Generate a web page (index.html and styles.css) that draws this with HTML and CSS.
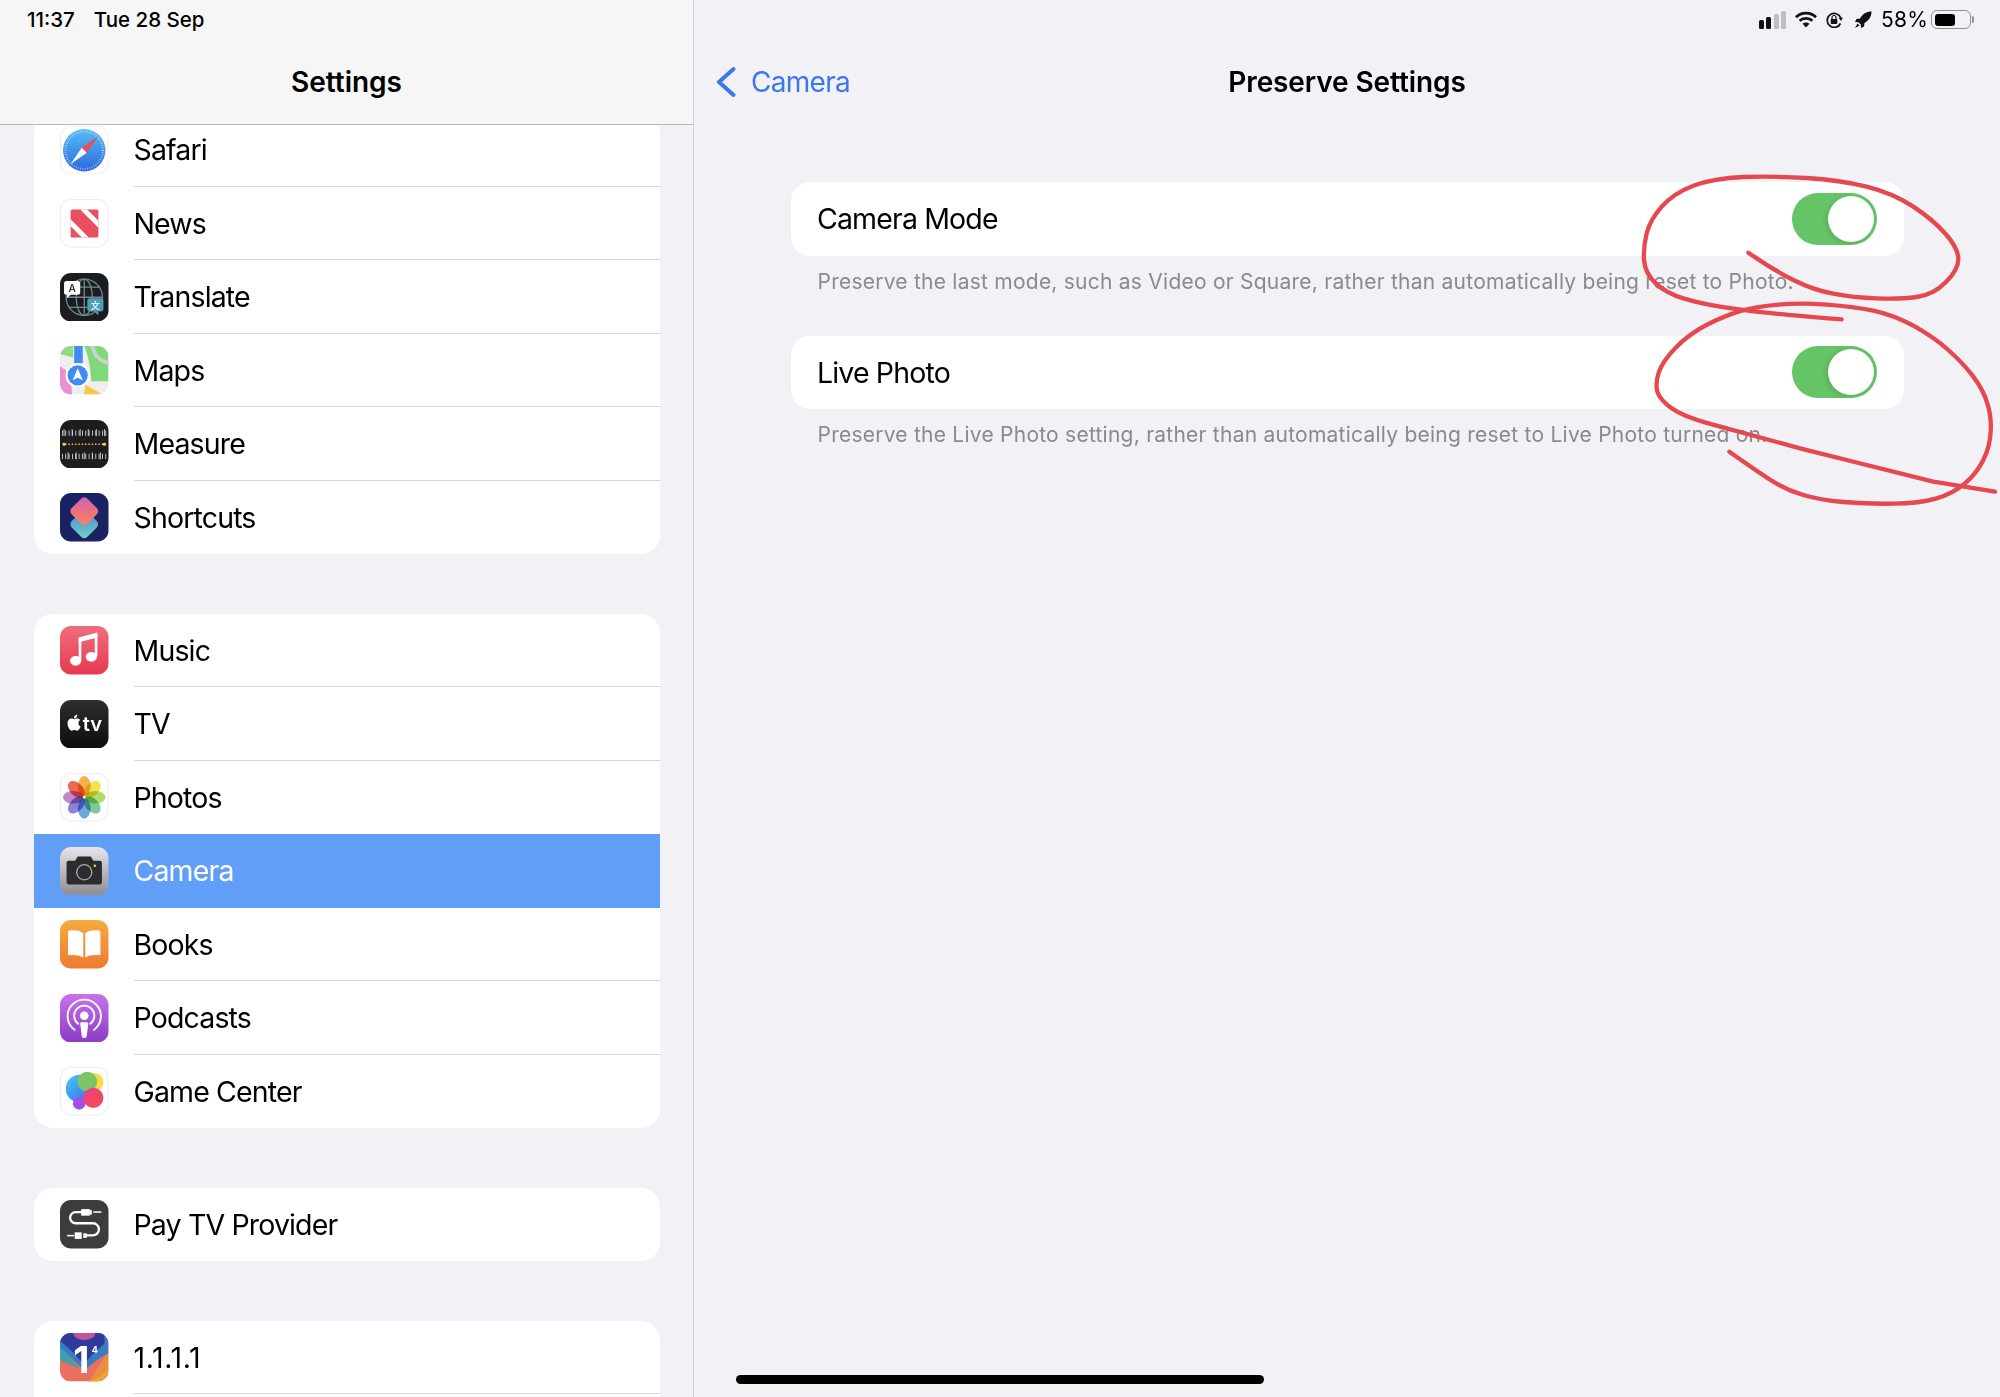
FILE: index.html
```html
<!DOCTYPE html>
<html lang="en">
<head>
<meta charset="utf-8">
<title>Preserve Settings</title>
<link rel="stylesheet" href="styles.css">
</head>
<body>
<div class="app">
  <aside class="sidebar">
    <header class="side-head">
      <div class="clock"><span>11:37</span><span>Tue 28 Sep</span></div>
      <h1 class="side-title">Settings</h1>
    </header>
    <div class="side-list">
      <section class="group group-first">
        <div class="row">
          <svg class="icon" viewBox="0 0 48 48"><defs><linearGradient id="sf" x1="0" y1="0" x2="0" y2="1"><stop offset="0" stop-color="#55bdf6"/><stop offset="1" stop-color="#2f68df"/></linearGradient></defs><rect x=".5" y=".5" width="47" height="47" rx="10.5" fill="#fff" stroke="#eeeef2"/><circle cx="24" cy="24" r="21" fill="url(#sf)"/><circle cx="24" cy="24" r="18.5" fill="none" stroke="#fff" stroke-opacity=".65" stroke-width="2" stroke-dasharray=".7 1.6"/><polygon points="37.5,10.5 21.5,21.5 26.5,26.5" fill="#ee4d4f"/><polygon points="10.5,37.5 21.5,21.5 26.5,26.5" fill="#fff"/></svg>
          <div class="label">Safari</div>
        </div>
        <div class="row">
          <svg class="icon" viewBox="0 0 48 48"><rect x=".5" y=".5" width="47" height="47" rx="10.5" fill="#fff" stroke="#eeeef2"/><rect x="10.5" y="10.5" width="27.5" height="27.5" rx="1.5" fill="#e9505f"/><polygon points="10.5,20 10.5,27 21.5,38 28.5,38" fill="#fff"/><polygon points="20,10.5 27,10.5 38,21.5 38,28.5" fill="#fff"/></svg>
          <div class="label">News</div>
        </div>
        <div class="row">
          <svg class="icon" viewBox="0 0 48 48"><rect width="48" height="48" rx="11" fill="#1b1c1f"/><g fill="none" stroke="#71898f" stroke-width="1.3"><circle cx="24" cy="24" r="18"/><ellipse cx="24" cy="24" rx="8" ry="18"/><path d="M24 6v36M6 24h36M9 14h30M9 34h30"/></g><rect x="4" y="8" width="16" height="13.5" rx="2.5" fill="#fff"/><path d="M7 21v4l4-4z" fill="#fff"/><text class="ico-a" x="12" y="19">A</text><rect x="27" y="25" width="16" height="13" rx="2.5" fill="#4aa0b8"/><path d="M38 38v4l-4-4z" fill="#4aa0b8"/><text class="ico-wen" x="35" y="35.5">文</text></svg>
          <div class="label">Translate</div>
        </div>
        <div class="row">
          <svg class="icon" viewBox="0 0 48 48"><clipPath id="mp"><rect width="48" height="48" rx="11"/></clipPath><g clip-path="url(#mp)"><rect width="48" height="48" fill="#eeeeee"/><path d="M0 0H13V11.500L0 8Z" fill="#8fdb7f"/><path d="M24 0H48V35H31C30 20 28 10 24 0Z" fill="#7fd979"/><path d="M32 -1C33 8 39 15 49 17" fill="none" stroke="#cfcfcf" stroke-width="4"/><rect x="14" y="0" width="8.500" height="17" fill="#3f8df0"/><path d="M0 20L10 27L12 48H0Z" fill="#e88fd0"/><path d="M25 38L42 48H24Z" fill="#f6c945"/><circle cx="17.500" cy="29" r="12" fill="#fff"/><circle cx="17.500" cy="29" r="10" fill="#3f8df0"/><path d="M17.500 22L22.500 34L17.500 31.500L12.500 34Z" fill="#fff"/></g></svg>
          <div class="label">Maps</div>
        </div>
        <div class="row">
          <svg class="icon" viewBox="0 0 48 48"><rect width="48" height="48" rx="11" fill="#1d1d1f"/><g fill="none" stroke="#e4e4e4" stroke-width=".8"><path d="M2 13H46" stroke-width="5" stroke-dasharray=".8 2.500"/><path d="M2 36H46" stroke-width="5" stroke-dasharray=".8 2.500"/><path d="M4 16V9M12 16V9M20 16V9M28 16V9M36 16V9M44 16V9M8 39V32M16 39V32M24 39V32M32 39V32M40 39V32"/></g><path d="M5 24H43" stroke="#f3cf3e" stroke-width="1.400" stroke-dasharray="1.400 1.900"/><rect x="2.500" y="22.500" width="3" height="3" rx="1" fill="#f3cf3e"/><rect x="42.500" y="22.500" width="3" height="3" rx="1" fill="#f3cf3e"/></svg>
          <div class="label">Measure</div>
        </div>
        <div class="row">
          <svg class="icon" viewBox="0 0 48 48"><defs><linearGradient id="st" x1="0" y1="0" x2="1" y2="1"><stop offset="0" stop-color="#c763c0"/><stop offset=".5" stop-color="#ee6f7f"/><stop offset="1" stop-color="#f08a62"/></linearGradient><linearGradient id="sb" x1="0" y1="0" x2="1" y2="1"><stop offset="0" stop-color="#4b7fd8"/><stop offset="1" stop-color="#74d7c0"/></linearGradient></defs><rect width="48" height="48" rx="11" fill="#1b2262"/><rect x="13" y="20" width="22" height="22" rx="4.500" transform="rotate(45 24 31)" fill="url(#sb)"/><rect x="13" y="7" width="22" height="22" rx="4.500" transform="rotate(45 24 18)" fill="url(#st)"/></svg>
          <div class="label">Shortcuts</div>
        </div>
      </section>

      <section class="group">
        <div class="row">
          <svg class="icon" viewBox="0 0 48 48"><defs><linearGradient id="mu" x1="0" y1="0" x2="0" y2="1"><stop offset="0" stop-color="#ee6f7e"/><stop offset="1" stop-color="#e8384f"/></linearGradient></defs><rect width="48" height="48" rx="11" fill="url(#mu)"/><g fill="#fff"><polygon points="18.500,11.500 37,6.500 37,11.500 18.500,16"/><rect x="18.500" y="12" width="2.600" height="22"/><rect x="34.400" y="8" width="2.600" height="22"/><ellipse cx="15.500" cy="34.500" rx="5.600" ry="4.800"/><ellipse cx="31" cy="30.500" rx="5.600" ry="4.800"/></g></svg>
          <div class="label">Music</div>
        </div>
        <div class="row">
          <svg class="icon" viewBox="0 0 48 48"><defs><linearGradient id="tvg" x1="0" y1="0" x2="0" y2="1"><stop offset="0" stop-color="#2e2e30"/><stop offset="1" stop-color="#0d0d0e"/></linearGradient></defs><rect width="48" height="48" rx="11" fill="url(#tvg)"/><path transform="translate(6 14.500) scale(.66)" fill="#fff" d="M12.152 6.896c-.948 0-2.415-1.078-3.96-1.04-2.04.027-3.91 1.183-4.961 3.014-2.117 3.675-.546 9.103 1.519 12.09 1.013 1.454 2.208 3.09 3.792 3.039 1.52-.065 2.09-.987 3.935-.987 1.831 0 2.35.987 3.96.948 1.637-.026 2.676-1.48 3.676-2.948 1.156-1.688 1.636-3.325 1.662-3.415-.039-.013-3.182-1.221-3.22-4.857-.026-3.04 2.48-4.494 2.597-4.559-1.429-2.09-3.623-2.324-4.39-2.376-2-.156-3.675 1.09-4.61 1.09zM15.53 3.83c.843-1.012 1.4-2.427 1.245-3.83-1.207.052-2.662.805-3.532 1.818-.78.896-1.454 2.338-1.273 3.714 1.338.104 2.715-.688 3.559-1.701"/><text class="ico-tv" x="22.500" y="30.500">tv</text></svg>
          <div class="label">TV</div>
        </div>
        <div class="row">
          <svg class="icon" viewBox="0 0 48 48"><rect x=".5" y=".5" width="47" height="47" rx="10.5" fill="#fff" stroke="#eeeef2"/><g class="petals"><ellipse cx="24" cy="13" rx="6.300" ry="10" fill="#f5b14a"/><ellipse cx="24" cy="13" rx="6.300" ry="10" fill="#f5e04e" transform="rotate(45 24 24)"/><ellipse cx="24" cy="13" rx="6.300" ry="10" fill="#b5d96a" transform="rotate(90 24 24)"/><ellipse cx="24" cy="13" rx="6.300" ry="10" fill="#7cc8a0" transform="rotate(135 24 24)"/><ellipse cx="24" cy="13" rx="6.300" ry="10" fill="#6fa8df" transform="rotate(180 24 24)"/><ellipse cx="24" cy="13" rx="6.300" ry="10" fill="#8a86d4" transform="rotate(225 24 24)"/><ellipse cx="24" cy="13" rx="6.300" ry="10" fill="#c287c4" transform="rotate(270 24 24)"/><ellipse cx="24" cy="13" rx="6.300" ry="10" fill="#ea6a55" transform="rotate(315 24 24)"/></g><circle cx="24" cy="24" r="1" fill="#fff"/></svg>
          <div class="label">Photos</div>
        </div>
        <div class="row row-on">
          <svg class="icon" viewBox="0 0 48 48"><defs><linearGradient id="cm" x1="0" y1="0" x2="0" y2="1"><stop offset="0" stop-color="#e6e6ea"/><stop offset="1" stop-color="#8c8c91"/></linearGradient></defs><rect width="48" height="48" rx="11" fill="url(#cm)"/><path d="M8.500 13.500H15L17.500 9.500H30.500L33 13.500H39.500A2 2 0 0 1 41.500 15.500V35A2 2 0 0 1 39.500 37H8.500A2 2 0 0 1 6.500 35V15.500A2 2 0 0 1 8.500 13.500Z" fill="#2c2c2e"/><circle cx="24" cy="25" r="7.500" fill="none" stroke="#a9a9ad" stroke-width="1.300"/><circle cx="34.500" cy="18.500" r="1.300" fill="#f2cd3f"/></svg>
          <div class="label">Camera</div>
        </div>
        <div class="row">
          <svg class="icon" viewBox="0 0 48 48"><defs><linearGradient id="bk" x1="0" y1="0" x2="0" y2="1"><stop offset="0" stop-color="#f5ab3e"/><stop offset="1" stop-color="#ee7a33"/></linearGradient></defs><rect width="48" height="48" rx="11" fill="url(#bk)"/><g fill="#fff"><path d="M23 13C19 10 13 10 9.500 10.500A1.500 1.500 0 0 0 8 12V35C13 34 19 34.500 23 37Z"/><path d="M25 13C29 10 35 10 38.500 10.500A1.500 1.500 0 0 1 40 12V35C35 34 29 34.500 25 37Z"/></g></svg>
          <div class="label">Books</div>
        </div>
        <div class="row">
          <svg class="icon" viewBox="0 0 48 48"><defs><linearGradient id="pd" x1="0" y1="0" x2="0" y2="1"><stop offset="0" stop-color="#c973ea"/><stop offset="1" stop-color="#8a3cc6"/></linearGradient></defs><rect width="48" height="48" rx="11" fill="url(#pd)"/><g fill="none" stroke="#fff" stroke-width="1.800" stroke-linecap="round"><path d="M14.500 35.500A16.500 16.500 0 1 1 33.500 35.500"/><path d="M18 29.500A10 10 0 1 1 30 29.500"/></g><circle cx="24" cy="21.500" r="4.200" fill="#fff"/><path d="M21.500 28H26.500A1.500 1.500 0 0 1 28 29.800L26.500 41A2.500 2.500 0 0 1 21.500 41L20 29.800A1.500 1.500 0 0 1 21.500 28Z" fill="#fff"/></svg>
          <div class="label">Podcasts</div>
        </div>
        <div class="row">
          <svg class="icon" viewBox="0 0 48 48"><defs><linearGradient id="gb" x1="0" y1="0" x2="1" y2="1"><stop offset="0" stop-color="#45ccf0"/><stop offset="1" stop-color="#3a62f0"/></linearGradient><linearGradient id="gr" x1="0" y1="0" x2="1" y2="1"><stop offset="0" stop-color="#f03c88"/><stop offset="1" stop-color="#ee4f52"/></linearGradient></defs><rect x=".5" y=".5" width="47" height="47" rx="10.5" fill="#fff" stroke="#eeeef2"/><circle cx="34" cy="15" r="9" fill="#f9dc4a"/><circle cx="19.500" cy="21.500" r="13.800" fill="url(#gb)"/><circle cx="27" cy="14.500" r="9.800" fill="#7cc468"/><circle cx="19" cy="36" r="6.200" fill="#a24fe6"/><circle cx="33" cy="30.500" r="10" fill="url(#gr)"/></svg>
          <div class="label">Game Center</div>
        </div>
      </section>

      <section class="group">
        <div class="row">
          <svg class="icon" viewBox="0 0 48 48"><rect width="48" height="48" rx="11" fill="#3c3c3e"/><path d="M22 12H15.500A5.500 5.500 0 0 0 15.500 23H32.500A6 6 0 0 1 32.500 35H26" fill="none" stroke="#fff" stroke-width="2.300"/><g fill="#fff"><rect x="21" y="9" width="8.500" height="6.500"/><rect x="29.500" y="10" width="2" height="4.500"/><rect x="33" y="11.200" width="8" height="1.500"/><rect x="14.500" y="32" width="7" height="6.500"/><rect x="23" y="33" width="3.500" height="4.500"/><rect x="7" y="34.500" width="7" height="1.500"/></g></svg>
          <div class="label">Pay TV Provider</div>
        </div>
      </section>

      <section class="group group-last">
        <div class="row">
          <svg class="icon" viewBox="0 0 48 48"><clipPath id="one"><rect width="48" height="48" rx="11"/></clipPath><g clip-path="url(#one)"><rect width="48" height="48" fill="#e9705f"/><path d="M48 16V48H28C36 38 42 26 48 16Z" fill="#ec8c3e"/><path d="M48 34V48H27C36 46 44 41 48 34Z" fill="#e8a83a"/><path d="M0 12V27C7 30 14 32 20 37C14 28 6 20 0 12Z" fill="#3f9fae"/><path d="M0 0H48V20C40 24 30 31 24 38C18 30 8 22 0 14Z" fill="#3a7cc4"/><path d="M0 0H44V11C36 17 28 25 24 32C18 24 8 14 0 8Z" fill="#2e3a9e"/><ellipse cx="24" cy="0" rx="11" ry="7" fill="#c4539c"/></g><text class="ico-one" x="21" y="40">1</text><text class="ico-four" x="34.500" y="19.500">4</text></svg>
          <div class="label label-num">1.1.1.1</div>
        </div>
      </section>
    </div>
  </aside>

  <main class="pane">
    <div class="status">
      <svg class="st-signal" viewBox="0 0 28 18"><rect x="0" y="9" width="5" height="9" rx="1.500" fill="#111"/><rect x="7" y="6" width="5" height="12" rx="1.500" fill="#111"/><rect x="15" y="3" width="5" height="15" rx="1.500" fill="#bdbdc2"/><rect x="22" y="0" width="5" height="18" rx="1.500" fill="#bdbdc2"/></svg>
      <svg class="st-wifi" viewBox="0 0 22 17"><g fill="none" stroke="#111" stroke-width="2.700"><path d="M1 6.200C6.500 .8 15.500 .8 21 6.200"/><path d="M4.600 9.800C8 6.500 14 6.500 17.400 9.800"/></g><path d="M7.500 12.800C9.500 11.200 12.500 11.200 14.500 12.800L11 16.500Z" fill="#111"/></svg>
      <svg class="st-lock" viewBox="0 0 18 16"><path d="M15.500 11.500A7 7 0 1 1 15.800 6" fill="none" stroke="#111" stroke-width="1.700"/><path d="M13.500 5.500L17.800 5.800L16 9Z" fill="#111"/><rect x="5.700" y="7" width="6.600" height="5" rx="1" fill="#111"/><path d="M7 7.500V5.500A2 2 0 0 1 11 5.500V7.500" fill="none" stroke="#111" stroke-width="1.200"/></svg>
      <svg class="st-rocket" viewBox="0 0 18 18"><path d="M17.500 .5C12.500 .5 8.500 3 6 7.500L2.500 8L1 11L4.500 11.200L6.800 13.500L7 17L10 15.500L10.500 12C15 9.500 17.500 5.500 17.500 .5Z" fill="#111"/><path d="M3.500 12.500L5.500 14.500L1 17Z" fill="#111"/></svg>
      <span class="st-pct">58%</span>
      <div class="battery"><div class="battery-fill"></div></div>
      <div class="battery-nub"></div>
    </div>
    <header class="nav">
      <div class="back">
        <svg class="chevron" viewBox="0 0 20 32"><path d="M17.500 3L3 16L17.500 29" fill="none" stroke="#3a78ec" stroke-width="4" stroke-linecap="round" stroke-linejoin="round"/></svg>
        <span>Camera</span>
      </div>
      <h2 class="nav-title">Preserve Settings</h2>
    </header>
    <div class="content">
      <section class="card">
        <div class="pref">
          <span>Camera Mode</span>
          <div class="toggle"><div class="knob"></div></div>
        </div>
      </section>
      <p class="note">Preserve the last mode, such as Video or Square, rather than automatically being reset to Photo.</p>
      <section class="card">
        <div class="pref">
          <span>Live Photo</span>
          <div class="toggle"><div class="knob"></div></div>
        </div>
      </section>
      <p class="note">Preserve the Live Photo setting, rather than automatically being reset to Live Photo turned on.</p>
    </div>
  </main>
</div>

<div class="home-bar"></div>

<svg class="scribble" viewBox="0 0 1200 1560">
  <g fill="none" stroke="#e5484f" stroke-width="13" stroke-linecap="round" stroke-linejoin="round">
    <path d="M445 758Q520 810 580 840Q640 870 700 881Q760 893 830 895Q900 898 950 891Q1000 885 1037 847Q1075 810 1075 777Q1075 745 1037 702Q1000 660 940 620Q880 580 800 560Q720 540 620 534Q520 528 430 531Q340 535 280 557Q220 580 185 620Q150 660 140 700Q130 740 132 780Q135 820 167 850Q200 880 250 895Q300 910 360 920Q420 930 490 937Q560 945 725 958"/>
    <path d="M388 1355Q480 1420 520 1445Q560 1470 610 1485Q660 1500 730 1506Q800 1512 880 1511Q960 1510 1010 1495Q1060 1480 1095 1450Q1130 1420 1150 1380Q1170 1340 1172 1295Q1175 1250 1162 1210Q1150 1170 1120 1130Q1090 1090 1045 1050Q1000 1010 940 977Q880 945 820 932Q760 920 680 914Q600 908 535 914Q470 920 425 932Q380 945 325 972Q270 1000 230 1040Q190 1080 177 1115Q165 1150 172 1175Q180 1200 215 1225Q250 1250 325 1270Q400 1290 600 1345L800 1395L1000 1445L1185 1475"/>
  </g>
</svg>
</body>
</html>
```

FILE: styles.css
```css
* { box-sizing: border-box; }
html, body { margin: 0; height: 100%; }
body {
  position: relative;
  width: 2000px;
  height: 1397px;
  overflow: hidden;
  background: #f1f1f6;
  color: #000;
  font-family: Inter, "Liberation Sans", sans-serif;
}
.app { display: flex; height: 100%; }

/* sidebar */
.sidebar {
  display: flex;
  flex-direction: column;
  flex: 0 0 694px;
  height: 100%;
  border-right: 1px solid #d2d2d6;
}
.side-head {
  position: relative;
  z-index: 1;
  flex: 0 0 125px;
  display: flex;
  flex-direction: column;
  background: #f6f6f6;
  border-bottom: 1px solid #b9b9bc;
}
.clock {
  display: flex;
  gap: 19px;
  padding: 7px 0 0 27px;
  height: 39px;
  font-size: 20.5px;
  line-height: 25px;
  font-weight: 450;
}
.side-title {
  margin: 0;
  height: 85px;
  line-height: 87px;
  text-align: center;
  font-size: 28px;
  font-weight: 600;
}
.side-list { flex: 1; overflow: hidden; padding: 0 33px 0 33.5px; }
.group {
  background: #fff;
  border-radius: 19px;
  overflow: hidden;
  margin-bottom: 59.5px;
}
.group-first { margin-top: -12px; }
.group-last { padding-bottom: 30px; }
.row {
  display: flex;
  align-items: center;
  height: 73.5px;
  padding-left: 26.5px;
}
.row:not(:last-child) .label { border-bottom: 1px solid #d8d8dc; }
.group-last .label { border-bottom: 1px solid #d8d8dc; }
.row-on { background: #609ef8; color: #fff; }
.row-on .label, .row:has(+ .row-on) .label { border-bottom-color: transparent !important; }
.icon { flex: 0 0 48.5px; width: 48.5px; height: 48.5px; }
.label {
  flex: 1;
  height: 100%;
  margin-left: 25px;
  font-size: 28.5px;
  letter-spacing: -.85px;
  line-height: 73px;
}
.label-num { letter-spacing: .6px; }

/* icon text */
.ico-a { font: 600 10px Inter, sans-serif; fill: #333; text-anchor: middle; }
.ico-wen { font: 500 9px "Noto Sans CJK SC", sans-serif; fill: #fff; text-anchor: middle; }
.ico-tv { font: 600 20px Inter, sans-serif; fill: #fff; }
.ico-one { font: 700 37px Inter, sans-serif; fill: #fff; text-anchor: middle; }
.ico-four { font: 700 9.5px Inter, sans-serif; fill: #fff; text-anchor: middle; }
.petals ellipse { mix-blend-mode: multiply; }

/* right pane */
.pane { flex: 1; min-width: 0; display: flex; flex-direction: column; }
.status {
  display: flex;
  align-items: center;
  justify-content: flex-end;
  height: 39px;
  padding-right: 26px;
}
.st-signal { width: 28px; height: 18px; margin-right: 8px; }
.st-wifi { width: 22px; height: 17px; margin-right: 8px; }
.st-lock { width: 18px; height: 16px; margin-right: 11px; }
.st-rocket { width: 18px; height: 18px; margin-right: 9px; }
.st-pct { font-size: 21px; margin-right: 3px; letter-spacing: .2px; }
.battery {
  width: 40px;
  height: 19px;
  padding: 2.5px;
  border: 1.5px solid #8e8e93;
  border-radius: 6px;
}
.battery-fill { width: 20px; height: 100%; background: #000; border-radius: 3px; }
.battery-nub { width: 2px; height: 7px; margin-left: 1px; background: #8e8e93; border-radius: 0 2px 2px 0; }
.nav {
  position: relative;
  height: 86px;
  display: flex;
  align-items: center;
  justify-content: center;
}
.nav-title { margin: 0; font-size: 28px; font-weight: 600; line-height: 36px; letter-spacing: -.1px; }
.back {
  position: absolute;
  left: 22px;
  top: 0;
  height: 86px;
  display: flex;
  align-items: center;
  gap: 15px;
  color: #3a78ec;
  font-size: 28px;
  letter-spacing: -.7px;
}
.chevron { width: 20px; height: 32px; }
.content { padding: 57px 96px 0 97px; }
.card { background: #fff; border-radius: 19px; }
.pref {
  display: flex;
  align-items: center;
  justify-content: space-between;
  height: 73.5px;
  padding: 0 27px 0 26px;
  font-size: 28.5px;
  letter-spacing: -.85px;
}
.toggle {
  display: flex;
  justify-content: flex-end;
  align-items: center;
  width: 85px;
  height: 52px;
  padding: 0 3px;
  border-radius: 26px;
  background: #65c466;
}
.knob {
  width: 46px;
  height: 46px;
  border-radius: 50%;
  background: #fff;
  box-shadow: -2px 1px 5px rgba(0,0,0,.12);
}
.note {
  margin: 0;
  height: 80px;
  padding: 11px 27px 0 26.5px;
  color: #8a8a8e;
  font-size: 21px;
  letter-spacing: .24px;
  line-height: 30px;
  white-space: nowrap;
}

/* overlays */
.home-bar {
  position: absolute;
  left: 736px;
  top: 1375px;
  width: 528px;
  height: 9px;
  border-radius: 5px;
  background: #000;
}
.scribble {
  position: absolute;
  left: 1600px;
  top: 0;
  width: 400px;
  height: 520px;
  pointer-events: none;
}
```
